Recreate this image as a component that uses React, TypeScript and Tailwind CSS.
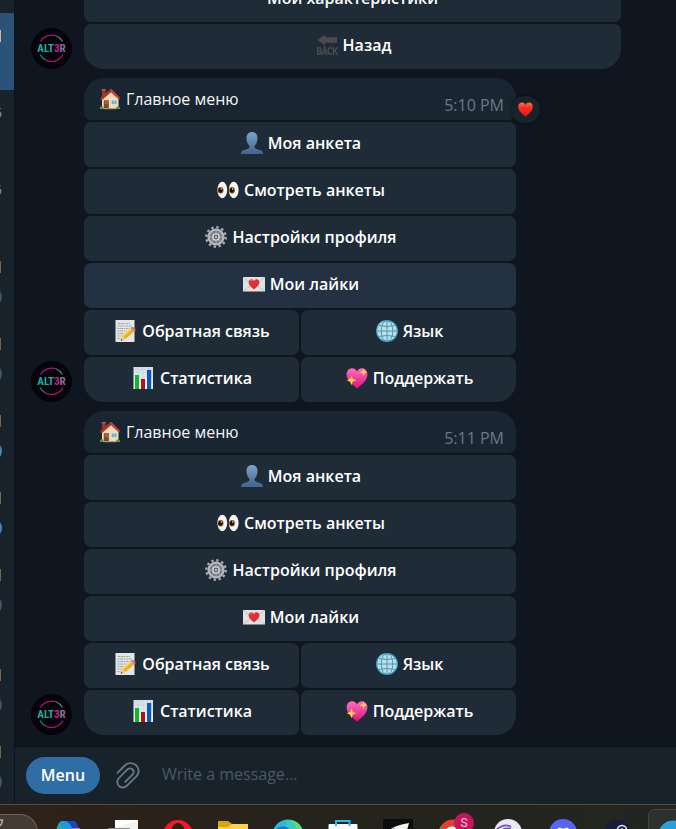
import type { ReactNode } from "react";

type IconProps = { children: ReactNode };

function Glyph({ children }: IconProps) {
  return (
    <svg viewBox="0 0 22 22" className="size-[22px] shrink-0" aria-hidden="true">
      {children}
    </svg>
  );
}

function HouseIcon() {
  return (
    <Glyph>
      <rect x="3" y="1.5" width="3.4" height="8" fill="#8d3a30" />
      <rect x="2.6" y="1" width="4.2" height="1.6" fill="#b5564a" />
      <path d="M3 10 11.5 3 19.5 10.5V20.500H3Z" fill="#f0dcb4" />
      <path d="M1 11.200 3 7.500 12 .8 20.800 9.800 20 11.500 12 4.300 3 12Z" fill="#a83328" />
      <path d="M12 .8 20.800 9.800 20 11.500 11.800 3.800Z" fill="#c4463a" />
      <rect x="4.800" y="12.200" width="5" height="8.300" fill="#7a4a2c" />
      <rect x="5.700" y="13" width="3.200" height="3.200" fill="#a9653a" />
      <rect x="12" y="11.800" width="6" height="5" fill="#e9efe9" />
      <rect x="12.600" y="12.400" width="2.200" height="3.800" fill="#6ba9cf" />
      <rect x="15.300" y="12.400" width="2.200" height="3.800" fill="#6ba9cf" />
      <path d="M.8 21c0-2 1-3 2.200-3s1.500 1.500 1.500 3ZM16.800 21c.2-1.800 1-2.800 2.300-2.800s2.100 1.300 2.100 2.800Z" fill="#5f9a35" />
      <rect x="4.500" y="20.200" width="12.500" height="1" fill="#b8a483" />
    </Glyph>
  );
}

function BackIcon() {
  return (
    <Glyph>
      <path d="M1.500 6 9 0.500V3.300H21V8.700H9V11.500Z" fill="#4b4b4b" />
      <g fill="none" stroke="#4b4b4b" strokeWidth="1.400">
        <path d="M1.700 13.500V20.500M1 13.700H3.200Q5 13.700 5 15.300T3.200 16.900H1.700M3.200 16.900Q5.300 16.900 5.300 18.600T3.200 20.300H1" />
        <path d="M6.500 21 8.700 13.300 11 21M7.300 18.600H10.200" />
        <path d="M16 15.400Q15.800 13.700 14.200 13.700 12.200 13.700 12.200 17T14.200 20.300Q15.800 20.300 16 18.600" />
        <path d="M17.600 13V21M21.500 13.200 17.800 17.800M19 16.700 21.700 21" />
      </g>
    </Glyph>
  );
}

function PersonIcon() {
  return (
    <Glyph>
      <defs>
        <linearGradient id="person" x1="0" y1="0" x2="0" y2="1">
          <stop offset="0" stopColor="#7ba3c8" />
          <stop offset="1" stopColor="#41658c" />
        </linearGradient>
      </defs>
      <path
        d="M11 0C7.500 0 5.400 2.500 5.500 6.300c0 3.200 1.300 6.200 3 7.500 0 1.800-.5 2.700-2 3.200-3.200 1-5.500 1.500-6.200 3.200-.3.700-.3 1.500-.3 1.800h22c0-.3 0-1.100-.3-1.800-.7-1.700-3-2.200-6.200-3.200-1.500-.5-2-1.400-2-3.200 1.700-1.300 3-4.300 3-7.500C16.600 2.500 14.500 0 11 0Z"
        fill="url(#person)"
      />
    </Glyph>
  );
}

function EyesIcon() {
  return (
    <Glyph>
      <ellipse cx="5.300" cy="11" rx="4.900" ry="8.200" fill="#f7f5f2" />
      <ellipse cx="16.700" cy="11" rx="4.900" ry="8.200" fill="#f7f5f2" />
      <ellipse cx="3.600" cy="11.300" rx="2.900" ry="3.300" fill="#8a5a22" />
      <ellipse cx="15" cy="11.300" rx="2.900" ry="3.300" fill="#8a5a22" />
      <ellipse cx="3.500" cy="11.300" rx="2" ry="2.400" fill="#1c0f06" />
      <ellipse cx="14.900" cy="11.300" rx="2" ry="2.400" fill="#1c0f06" />
      <circle cx="4.200" cy="10" r=".7" fill="#fff" />
      <circle cx="15.600" cy="10" r=".7" fill="#fff" />
    </Glyph>
  );
}

function GearIcon() {
  return (
    <Glyph>
      <circle cx="11" cy="11" r="9.700" fill="none" stroke="#a9adb2" strokeWidth="2.400" strokeDasharray="2.400 2.680" />
      <circle cx="11" cy="11" r="7.300" fill="none" stroke="#b4b8bd" strokeWidth="2.600" />
      <circle cx="11" cy="11" r="6" fill="#7d8187" />
      <g stroke="#9a9ea3" strokeWidth="1.300">
        <path d="M11 4.500v13M4.500 11h13M6.400 6.400l9.200 9.200M15.600 6.400l-9.200 9.200" />
      </g>
      <circle cx="11" cy="11" r="3.100" fill="#62666c" stroke="#d4d7da" strokeWidth="1.400" />
      <circle cx="11" cy="11" r="1" fill="#cfd2d5" />
    </Glyph>
  );
}

function LoveLetterIcon() {
  return (
    <Glyph>
      <rect x="0" y="4" width="22" height="14.500" rx=".6" fill="#e3e2e2" />
      <path d="M.5 4.500 9 11.500.5 18M21.500 4.500 13 11.500l8.500 6.500" fill="none" stroke="#b9b8b8" strokeWidth=".8" />
      <path d="M11 16.500C7.500 13.700 5.600 11.800 5.600 9.300c0-3.300 4-4.200 5.400-1.300 1.400-2.900 5.400-2 5.400 1.300 0 2.500-1.900 4.400-5.400 7.200Z" fill="#e02f35" />
      <path d="M6.900 8.500c.3-1.300 1.600-1.800 2.600-1.200" stroke="#f28080" strokeWidth="1" fill="none" />
    </Glyph>
  );
}

function MemoIcon() {
  return (
    <Glyph>
      <rect x="0.500" y="0" width="19" height="22" fill="#e4e6e6" />
      <g stroke="#8c9194" strokeWidth=".8" strokeDasharray="2 .7 3 .6 1.300 .8">
        <path d="M3 3.500h12M2.500 6h14M2.500 8.500h12M2.500 11h9M2.500 13.500h6M2.500 16h4M2.500 18.500h3" />
      </g>
      <path d="M5.700 20.700 7.300 15.500 16.500 7.500 19.700 11 10.500 18.900Z" fill="#eeb01c" />
      <path d="M7.300 15.500 16.500 7.500 17.500 8.600 8.300 16.600Z" fill="#ffdb58" />
      <path d="M5.700 20.700 7.300 15.500 10.500 18.900Z" fill="#efcf9d" />
      <path d="M5.700 20.700 6.300 18.800 7.600 20.100Z" fill="#333" />
      <path d="M15.500 8.400 17 7.100 20.200 10.500 18.700 11.800Z" fill="#9fb2bb" />
      <path d="M16.600 7.400c1.600-1.300 5 2 3.500 3.500l-.6.300-3.300-3.400Z" fill="#e66b74" />
    </Glyph>
  );
}

function GlobeIcon() {
  return (
    <Glyph>
      <circle cx="11" cy="11" r="11" fill="#3f9dc0" />
      <circle cx="11" cy="11" r="9.800" fill="#c3dbe2" />
      <g stroke="#3f9dc0" strokeWidth="1" fill="none">
        <path d="M11 0v22M.5 11h21M2.500 5.500q8.500 2 17 0M2.500 16.500q8.500-2 17 0" />
        <ellipse cx="11" cy="11" rx="5.800" ry="10.500" />
      </g>
      <path d="M1 7A11 11 0 0 1 9 .2C5.500 2.500 3 5 1 7Z" fill="#78c4dc" />
    </Glyph>
  );
}

function ChartIcon() {
  return (
    <Glyph>
      <defs>
        <linearGradient id="chart" x1="0" y1="0" x2="0" y2="1">
          <stop offset="0" stopColor="#cfdde6" />
          <stop offset="1" stopColor="#f4f8fa" />
        </linearGradient>
      </defs>
      <rect x="0.500" y="0" width="19.500" height="22" fill="url(#chart)" />
      <path d="M.5 5h19.500M.5 10h19.500M.5 15h19.500M5 0v22M10 0v22M15 0v22" stroke="#bccbd6" strokeWidth=".4" />
      <rect x="2" y="8" width="4" height="14" fill="#10b824" />
      <rect x="8" y="12" width="4" height="10" fill="#b90d18" />
      <rect x="14" y="3" width="4.200" height="19" fill="#0a58b8" />
    </Glyph>
  );
}

function SparkHeartIcon() {
  return (
    <Glyph>
      <defs>
        <linearGradient id="spark" x1="0" y1="0" x2="0" y2="1">
          <stop offset="0" stopColor="#ff6fbd" />
          <stop offset="1" stopColor="#dc1280" />
        </linearGradient>
      </defs>
      <path d="M11 21.500C4.500 16.500.6 12.500.6 7.300c0-6.500 7.800-8.300 10.400-2.700 2.600-5.600 10.400-3.800 10.400 2.700 0 5.200-3.900 9.200-10.400 14.200Z" fill="url(#spark)" />
      <path d="M5.500 8.500 6.800 12 10.500 13.300 6.800 14.600 5.500 18.200 4.200 14.600.6 13.300 4.200 12Z" fill="#ffd94a" />
      <path d="M17.500 1.500 18.500 4.300 21.300 5.300 18.500 6.300 17.500 9.100 16.500 6.300 13.700 5.300 16.500 4.300Z" fill="#ffd94a" />
    </Glyph>
  );
}

function RedHeart() {
  return (
    <svg viewBox="0 0 15 15" className="size-[15px]" aria-hidden="true">
      <defs>
        <linearGradient id="heart" x1="0" y1="0" x2="0" y2="1">
          <stop offset="0" stopColor="#ff6a50" />
          <stop offset=".35" stopColor="#ff3420" />
          <stop offset="1" stopColor="#d3140f" />
        </linearGradient>
      </defs>
      <path d="M7.500 14.700C3 11 .2 8.500.2 4.700c0-4.600 5.500-5.500 7.300-1.800C9.300-.8 14.800.1 14.800 4.700c0 3.800-2.800 6.300-7.300 10Z" fill="url(#heart)" />
    </svg>
  );
}

function Avatar() {
  return (
    <div className="relative flex size-[41px] shrink-0 items-center justify-center rounded-full bg-[#06040b]">
      <svg viewBox="0 0 41 41" className="absolute inset-0" fill="none" strokeWidth="1.200" aria-hidden="true">
        <path d="M9.500 13.500A13 13 0 0 1 25 7.800" stroke="#b3127a" />
        <path d="M25 7.800A13 13 0 0 1 31.500 13.500" stroke="#4c7f87" />
        <path d="M9 26.500A13 13 0 0 0 14.500 32" stroke="#178f86" />
        <path d="M14.500 32A13 13 0 0 0 32 26.500" stroke="#b3127a" />
      </svg>
      <span className="relative font-['Liberation_Sans_Narrow','Roboto_Condensed',Roboto,sans-serif] text-[11px] leading-none font-bold text-[#25ab9f]">
        ALT<span className="text-[#d41c85]">3</span>
        <span className="text-[#80718f]">R</span>
      </span>
    </div>
  );
}

type KeyProps = { icon?: ReactNode; label: string; hot?: boolean; corner?: string };

function Key({ icon, label, hot, corner = "" }: KeyProps) {
  return (
    <button
      type="button"
      className={`flex h-[45px] min-w-0 flex-1 items-center justify-center gap-[5px] rounded-[7px] pb-[3px] leading-[22px] font-semibold whitespace-nowrap text-white ${icon ? "pl-[2px]" : ""} ${hot ? "bg-[#233142]" : "bg-[#1f2c38]"} ${corner}`}
    >
      {icon}
      {label}
    </button>
  );
}

function MenuMessage({ time, reaction, hot }: { time: string; reaction?: boolean; hot?: boolean }) {
  return (
    <article className="flex items-end gap-3">
      <Avatar />
      <div className="flex w-full max-w-[432px] flex-col gap-[2px]">
        <div className="relative flex h-[42px] justify-between rounded-t-[20px] rounded-b-[7px] bg-[#192632] pr-3 pl-[15px] leading-[22px]">
          <p className="flex gap-[5px] self-center text-[#f3f5f7]">
            <HouseIcon />
            Главное меню
          </p>
          <time className="self-end pb-1 text-[#6a7885]">{time}</time>
          {reaction && (
            <button
              type="button"
              aria-label="Реакция"
              className="absolute top-[18px] -right-6 flex h-[27px] w-[29px] items-center justify-center rounded-full bg-[#18232c] shadow-[0_0_3px_#080d14]"
            >
              <RedHeart />
            </button>
          )}
        </div>
        <div className="flex">
          <Key icon={<PersonIcon />} label="Моя анкета" />
        </div>
        <div className="flex">
          <Key icon={<EyesIcon />} label="Смотреть анкеты" />
        </div>
        <div className="flex">
          <Key icon={<GearIcon />} label="Настройки профиля" />
        </div>
        <div className="flex">
          <Key icon={<LoveLetterIcon />} label="Мои лайки" hot={hot} />
        </div>
        <div className="grid grid-cols-2 gap-[2px]">
          <Key icon={<MemoIcon />} label="Обратная связь" />
          <Key icon={<GlobeIcon />} label="Язык" />
          <Key icon={<ChartIcon />} label="Статистика" corner="rounded-bl-[20px]" />
          <Key icon={<SparkHeartIcon />} label="Поддержать" corner="rounded-br-[20px]" />
        </div>
      </div>
    </article>
  );
}

type ChatRow = { mark: "bar" | "digit"; badge?: "gray" | "blue"; active?: boolean; spaced?: boolean };

const chatRows: ChatRow[] = [
  { mark: "bar", active: true },
  { mark: "digit" },
  { mark: "digit" },
  { mark: "bar", badge: "gray" },
  { mark: "bar", badge: "gray" },
  { mark: "bar", badge: "blue" },
  { mark: "bar", badge: "blue" },
  { mark: "bar", badge: "gray" },
  { mark: "bar", badge: "gray", spaced: true },
  { mark: "bar", badge: "gray" },
];

function ChatList() {
  return (
    <aside className="w-[15px] shrink-0 overflow-hidden border-r border-[#0c131b] bg-[#18222b] pt-[13px]">
      {chatRows.map((row, i) => (
        <div
          key={i}
          className={`flex h-[77px] flex-col items-start pt-[17px] ${row.active ? "bg-[#2b5278]" : ""} ${row.spaced ? "mt-[23px]" : ""}`}
        >
          {row.mark === "bar" ? (
            <span className={`h-3 w-px ${row.active ? "bg-[#e8ac8c]" : "bg-[#80643f]"}`} />
          ) : (
            <span className="-ml-[6px] text-sm leading-3 text-[#8b9691]">5</span>
          )}
          {row.badge && (
            <span
              className={`mt-[14px] -ml-[18px] size-5 rounded-full ${row.badge === "blue" ? "bg-[#3f86c6]" : "bg-[#3e546a]"}`}
            />
          )}
        </div>
      ))}
    </aside>
  );
}

function Composer() {
  return (
    <form className="flex h-[58px] shrink-0 items-center border-t border-[#0b1119] bg-[#18222b] pl-[11px]">
      <button type="button" className="h-[37px] w-[74px] rounded-full bg-[#2f6ea5] pb-px font-semibold text-white">
        Menu
      </button>
      <button type="button" aria-label="Attach" className="ml-4">
        <svg viewBox="0 0 24 27" className="h-[27px] w-6" fill="none" stroke="#6c7883" strokeWidth="1.800" strokeLinecap="round" aria-hidden="true">
          <path d="M1.500 10.800 8.800 3.500C11.500.8 16.500.2 20 3.200c3.600 3.200 3.500 8 .6 10.900L11 23.700c-2.300 2.300-5.800 2.400-8 .3s-2.300-5.600 0-8l8.200-8.300c1.500-1.500 3.900-1.600 5.300-.2s1.400 3.600 0 5.100l-7.300 7.300" />
        </svg>
      </button>
      <input
        type="text"
        aria-label="Message"
        placeholder="Write a message..."
        className="ml-[22px] min-w-0 flex-1 bg-transparent pb-[3px] text-white outline-none placeholder:text-[#4c5863]"
      />
    </form>
  );
}

const taskIcons: { name: string; art: ReactNode }[] = [
  {
    name: "Copilot",
    art: (
      <>
        <path d="M3 12Q5 1 9 1H20Q24 2 25 8H18L14 12Z" fill="#1b9bdc" />
        <path d="M13 1H20Q24 2 25 8H19Q17 3 13 1Z" fill="#1546c8" />
        <path d="M3 12Q4 5 7 4L14 9 12 14H3Z" fill="#29a6ae" />
        <path d="M18 8H27L28 14H14Z" fill="#b968dd" />
      </>
    ),
  },
  {
    name: "Documents",
    art: (
      <>
        <rect x="7" y="0" width="23" height="22" fill="#f3f3f3" />
        <path d="M7 8V0h23Z" fill="#fff" />
        <path d="M0 9q0-1 1-1h21v6H0Z" fill="#8e8c8c" />
      </>
    ),
  },
  {
    name: "Opera",
    art: (
      <>
        <circle cx="15" cy="15" r="15" fill="#f31727" />
        <ellipse cx="15" cy="15" rx="7.500" ry="12" fill="#2b2018" />
      </>
    ),
  },
  {
    name: "Files",
    art: (
      <>
        <path d="M0 2q0-1 1-1h9l4 3v8H0Z" fill="#dda20b" />
        <path d="M0 7h10l4-3h16v12H0Z" fill="#ffd04a" />
      </>
    ),
  },
  {
    name: "Edge",
    art: (
      <>
        <circle cx="15" cy="15" r="15.500" fill="#2cb7dc" />
        <path d="M18 0Q28 2 30 12H18Z" fill="#5edb73" />
        <path d="M13 0Q22 0 25 12H14Z" fill="#38cbb9" />
        <path d="M0 12Q5 5 13 7 18 9 19 14H0Z" fill="#1478c9" />
      </>
    ),
  },
  {
    name: "Store",
    art: (
      <>
        <path d="M8 6V1h13.500v5" fill="none" stroke="#25baf2" strokeWidth="2" />
        <rect x=".5" y="4" width="29" height="20" rx="1" fill="#f5f7f9" />
        <path d="M8 4v2M21.500 4v2" stroke="#25baf2" strokeWidth="2" />
      </>
    ),
  },
  {
    name: "Wing",
    art: (
      <>
        <rect x="0" y="-1" width="30" height="30" fill="#0c0c0c" />
        <path d="M7 10Q10 6 26 3L23 14H5L12 8Z" fill="#f2f2f2" />
      </>
    ),
  },
  {
    name: "Chrome",
    art: (
      <>
        <circle cx="15" cy="14" r="14.500" fill="#e5402f" />
        <path d="M0 12 3 6 9 16H0Z" fill="#2da44e" />
        <circle cx="14" cy="14" r="7.500" fill="#fff" />
        <circle cx="14" cy="15" r="6" fill="#3b7de0" />
      </>
    ),
  },
  {
    name: "Swift",
    art: (
      <>
        <circle cx="15" cy="13" r="14" fill="#ece8f6" />
        <path d="M4 9Q12 3 18 7M6 12Q12 7 18 9" fill="none" stroke="#6f59a8" strokeWidth="1.800" />
      </>
    ),
  },
  {
    name: "Discord",
    art: (
      <>
        <circle cx="15" cy="13" r="14" fill="#5865f2" />
        <path d="M8 13Q8.500 8 12 7.500l1.500 1h3.500l1.500-1q3.500.5 4 5.500v4H8Z" fill="#fff" />
      </>
    ),
  },
  {
    name: "Steam",
    art: (
      <>
        <circle cx="14" cy="14" r="14" fill="#171c3a" />
        <circle cx="19" cy="10" r="4.500" fill="none" stroke="#e8eaf0" strokeWidth="1.600" />
        <circle cx="19" cy="10" r="1.800" fill="#e8eaf0" />
      </>
    ),
  },
  {
    name: "Telegram",
    art: <circle cx="15" cy="15" r="14.500" fill="#2a9fdc" />,
  },
];

function Taskbar() {
  return (
    <nav className="flex h-[25px] shrink-0 overflow-hidden border-t border-[#514b44] bg-linear-to-r from-[#2f2118] via-[#24231c] to-[#232620]">
      <div className="mt-[9px] h-9 w-[38px] shrink-0 rounded-tr-[18px] border-t border-r border-[#6b625a] bg-[#463b33]">
        <svg viewBox="0 0 4 10" className="mt-1 h-[10px] w-1" aria-hidden="true">
          <path d="M0 1H2.500L1.500 5 0 7" fill="none" stroke="#b3aca2" strokeWidth="1.500" />
        </svg>
      </div>
      <div className="ml-[2px] flex">
        {taskIcons.map(({ name, art }) => (
          <button
            key={name}
            type="button"
            aria-label={name}
            className={`relative flex h-12 shrink-0 items-start justify-center ${name === "Telegram" ? "mt-1 ml-[3px] w-[50px] rounded-[6px] border border-[#41443f] bg-[#2d302d] pt-[10px]" : "w-[55px] pt-[15px]"}`}
          >
            <svg viewBox="0 0 30 30" className="size-[30px] overflow-visible" aria-hidden="true">
              {art}
            </svg>
            {name === "Chrome" && (
              <span className="absolute top-2 right-[6px] flex size-5 items-center justify-center rounded-full bg-[#c2185b] font-[Roboto,sans-serif] text-xs text-[#f0c4d6]">
                S
              </span>
            )}
          </button>
        ))}
      </div>
    </nav>
  );
}

export default function App() {
  return (
    <div className="flex h-screen flex-col overflow-hidden bg-[#0f1620] font-['Open_Sans','Noto_Sans',sans-serif] text-base">
      <div className="flex min-h-0 flex-1">
        <ChatList />
        <main className="flex min-w-0 flex-1 flex-col">
          <section className="flex min-h-0 flex-1 flex-col justify-end gap-[9px] overflow-hidden px-4 pb-[11px]">
            <article className="flex items-end gap-3">
              <Avatar />
              <div className="flex w-full max-w-[537px] flex-col gap-[2px]">
                <div className="flex">
                  <Key label="Мои характеристики" />
                </div>
                <div className="flex">
                  <Key icon={<BackIcon />} label="Назад" corner="rounded-b-[20px]" />
                </div>
              </div>
            </article>
            <MenuMessage time="5:10 PM" reaction hot />
            <MenuMessage time="5:11 PM" />
          </section>
          <Composer />
        </main>
      </div>
      <Taskbar />
    </div>
  );
}
